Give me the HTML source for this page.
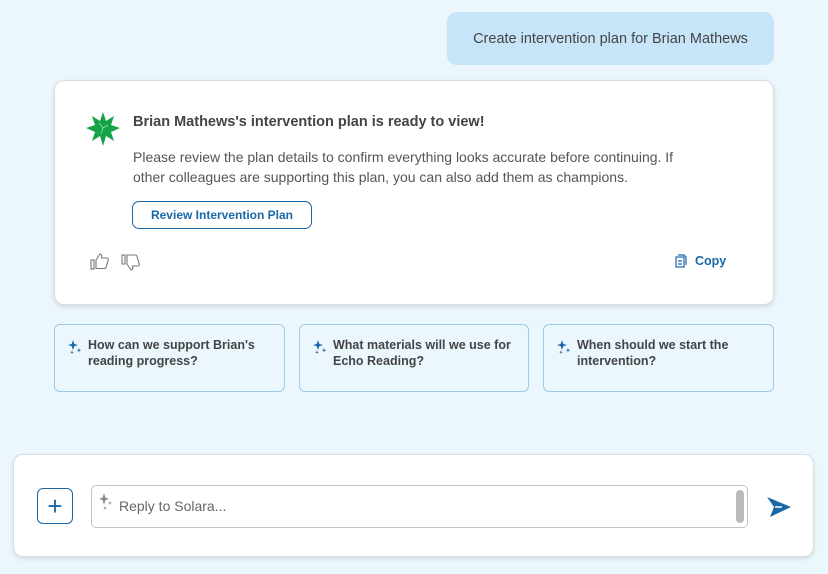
<!DOCTYPE html>
<html><head><meta charset="utf-8"><style>
*{box-sizing:border-box;margin:0;padding:0}
body{width:828px;height:574px;background:#ebf6fd;font-family:"Liberation Sans",sans-serif;position:relative;overflow:hidden;color:#444}
.user{position:absolute;left:447px;top:12px;width:327px;height:53px;background:#c7e5f8;border-radius:10px;font-size:14.5px;color:#444;display:flex;align-items:center;justify-content:center}
.card{position:absolute;left:54px;top:80px;width:720px;height:225px;background:#fff;border:1px solid #d8dde0;border-radius:10px;box-shadow:0 2px 5px rgba(0,0,0,.12)}
.title{position:absolute;left:78px;top:33px;font-weight:bold;font-size:14.5px;color:#444}
.body{position:absolute;left:78px;top:66px;font-size:14px;line-height:20px;color:#555;width:565px}
.btn{position:absolute;left:77px;top:120px;width:180px;height:28px;border:1px solid #1a67a8;border-radius:7px;color:#1a67a8;font-size:12px;font-weight:bold;display:flex;align-items:center;justify-content:center}
.copy{position:absolute;left:620px;top:173px;color:#1a67a8;font-size:12.5px;font-weight:bold;display:flex;align-items:center;gap:8px}
.sug{position:absolute;top:324px;width:231px;height:68px;border:1px solid #9ccbe8;border-radius:6px;font-size:12.5px;font-weight:bold;color:#444;line-height:16px;padding:12px 10px 0 33px}
.sug svg{position:absolute;left:13px;top:15px}
.input{position:absolute;left:13px;top:454px;width:801px;height:103px;background:#fff;border:1px solid #d8dde0;border-radius:10px;box-shadow:0 2px 4px rgba(0,0,0,.1)}
.plus{position:absolute;left:23px;top:33px;width:36px;height:36px;border:1px solid #1a67a8;border-radius:6px;color:#1a67a8;font-size:26px;display:flex;align-items:center;justify-content:center;font-weight:300}
.field{position:absolute;left:77px;top:30px;width:657px;height:43px;border:1px solid #c4c4c4;border-radius:5px;font-size:14px;color:#666;padding:12px 0 0 27px}
.sb{position:absolute;right:3px;top:4px;width:8px;height:33px;background:#bbb;border-radius:4px}
</style></head><body>
<div class="user">Create intervention plan for Brian Mathews</div>
<div class="card">
<svg style="position:absolute;left:31px;top:30px" width="34" height="36" viewBox="0 0 34 36"><polygon fill="#15a345" points="17,1 20,10 28,5 25,14 34,17 25,21 28,30 20,25 17,35 14,25 6,30 9,21 0,17 9,14 6,5 14,10"/><path d="M13 12l4 5 5-3M17 17l-2 6" stroke="#9be0b0" stroke-width=".8" fill="none"/></svg>
<div class="title">Brian Mathews's intervention plan is ready to view!</div>
<div class="body">Please review the plan details to confirm everything looks accurate before continuing. If other colleagues are supporting this plan, you can also add them as champions.</div>
<div class="btn">Review Intervention Plan</div>
<svg style="position:absolute;left:35px;top:171px" width="20" height="20" viewBox="0 0 20 20" fill="none" stroke="#777" stroke-width="1.1"><rect x="1" y="8" width="3" height="9"/><path d="M6 8l4-6c2 0 2 2 1.5 4H17c1 0 1.5 1 1.2 2l-2 7c-.3 1-1 1.5-2 1.5H6z"/></svg>
<svg style="position:absolute;left:66px;top:172px" width="20" height="20" viewBox="0 0 20 20" fill="none" stroke="#777" stroke-width="1.1"><rect x="1" y="2" width="3" height="9"/><path d="M6 11l4 6c2 0 2-2 1.5-4H17c1 0 1.5-1 1.2-2l-2-7C16 3 15.3 2 14.3 2H6z"/></svg>
<div class="copy"><svg width="12" height="14" viewBox="0 0 12 14" fill="none" stroke="#1a67a8" stroke-width="1.2"><rect x="1" y="3" width="8" height="10"/><path d="M3 1h6l2 2v8"/><path d="M3 7h4M3 10h4"/></svg>Copy</div>
</div>
<div class="sug" style="left:54px"><svg width="14" height="14" viewBox="0 0 14 14" fill="#1a67a8"><path d="M5 0l1.3 4L10 5 6.3 6.2 5 10 3.7 6.2 0 5l3.7-1z"/><path d="M11 8l.6 1.6 1.6.6-1.6.6L11 12.5l-.6-1.7-1.6-.6 1.6-.6z"/><path d="M4 10.5l.5 1.3 1.2.4-1.2.5L4 14l-.5-1.3-1.2-.5 1.2-.4z"/></svg>How can we support Brian's reading progress?</div>
<div class="sug" style="left:299px;width:230px"><svg width="14" height="14" viewBox="0 0 14 14" fill="#1a67a8"><path d="M5 0l1.3 4L10 5 6.3 6.2 5 10 3.7 6.2 0 5l3.7-1z"/><path d="M11 8l.6 1.6 1.6.6-1.6.6L11 12.5l-.6-1.7-1.6-.6 1.6-.6z"/><path d="M4 10.5l.5 1.3 1.2.4-1.2.5L4 14l-.5-1.3-1.2-.5 1.2-.4z"/></svg>What materials will we use for Echo Reading?</div>
<div class="sug" style="left:543px"><svg width="14" height="14" viewBox="0 0 14 14" fill="#1a67a8"><path d="M5 0l1.3 4L10 5 6.3 6.2 5 10 3.7 6.2 0 5l3.7-1z"/><path d="M11 8l.6 1.6 1.6.6-1.6.6L11 12.5l-.6-1.7-1.6-.6 1.6-.6z"/><path d="M4 10.5l.5 1.3 1.2.4-1.2.5L4 14l-.5-1.3-1.2-.5 1.2-.4z"/></svg>When should we start the intervention?</div>
<div class="input">
<div class="plus">+</div>
<div class="field"><svg style="position:absolute;left:7px;top:7px" width="14" height="18" viewBox="0 0 14 18" fill="#888"><path d="M5 0l1.3 4.5L10 6 6.3 7.3 5 12 3.7 7.3 0 6l3.7-1.5z"/><path d="M11 8l.5 1.5 1.5.5-1.5.5L11 12l-.5-1.5L9 10l1.5-.5z"/><path d="M6 13l.5 1.5 1.3.5-1.3.5L6 17l-.5-1.5L4.2 15l1.3-.5z"/></svg>Reply to Solara...<div class="sb"></div></div>
<svg style="position:absolute;left:752px;top:40px" width="26" height="24" viewBox="0 0 26 24"><path d="M1 2L25 12 4 22 8 12z" fill="#1a67a8"/><path d="M9 12h7" stroke="#fff" stroke-width="1.5"/></svg>
</div>
</body></html>
